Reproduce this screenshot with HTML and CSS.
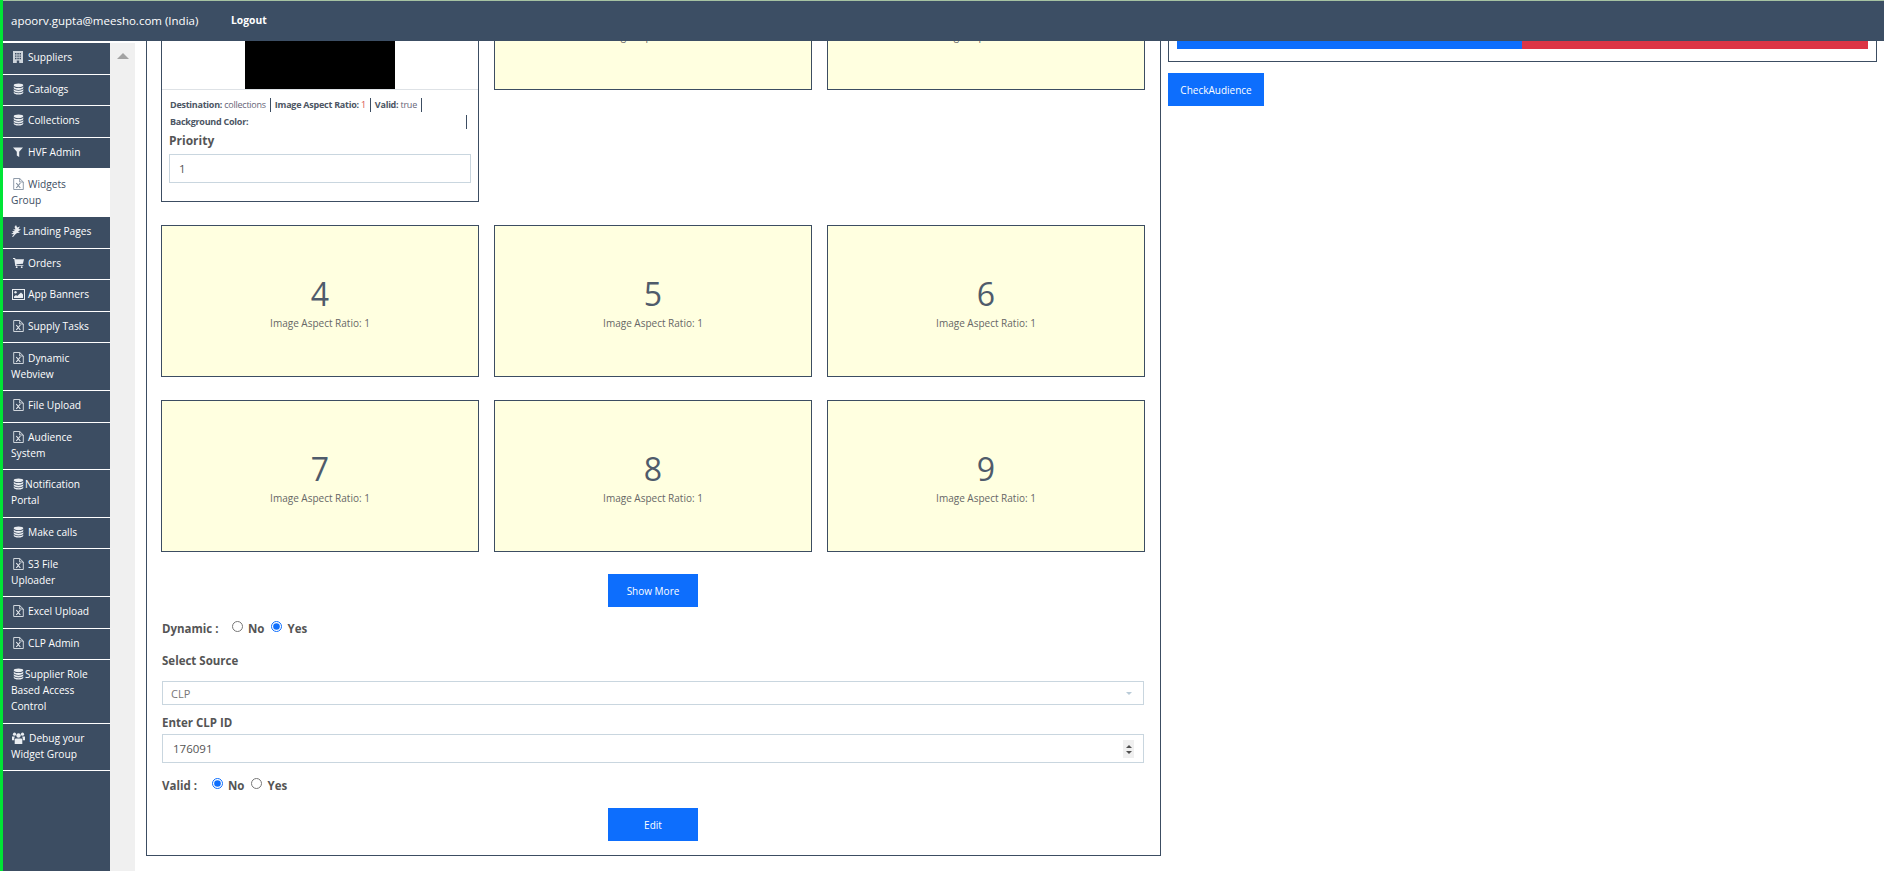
FILE: index.html
```html
<!DOCTYPE html>
<html lang="en">
<head>
<meta charset="utf-8">
<title>Widgets Group</title>
<link rel="stylesheet" href="styles.css">
</head>
<body>
<svg class="sprites" aria-hidden="true">
  <symbol id="i-building" viewBox="0 0 10 12"><path fill-rule="evenodd" d="M0 0h10v12H0zM2 2v1.4h1.5V2zm2.3 0v1.4h1.5V2zm2.2 0v1.4H8V2zM2 4.4v1.4h1.5V4.4zm2.3 0v1.4h1.5V4.4zm2.2 0v1.4H8V4.4zM2 6.8v1.4h1.5V6.8zm2.3 0v1.4h1.5V6.8zm2.2 0v1.4H8V6.8zM3.8 9.4V12h2.4V9.4z"/></symbol>
  <symbol id="i-db" viewBox="0 0 12 12"><ellipse cx="6" cy="2" rx="5.2" ry="2"/><path d="M.8 3.3C1.4 4.5 3.6 5 6 5s4.600-.5 5.200-1.700V5C11.200 6.200 8.800 7 6 7S.8 6.200.8 5zM.8 6.100C1.400 7.300 3.600 7.800 6 7.800s4.600-.5 5.200-1.700v1.600C11.200 8.900 8.800 9.700 6 9.700S.8 8.900.8 7.700zM.8 8.800C1.400 10 3.600 10.500 6 10.500s4.600-.5 5.200-1.700v1.200C11.200 11.200 8.800 12 6 12S.8 11.200.8 10z"/></symbol>
  <symbol id="i-filter" viewBox="0 0 10 10"><path d="M0 .5h10L6.200 4.800V10L3.800 8.400V4.800z"/></symbol>
  <symbol id="i-file" viewBox="0 0 11 12"><path fill="none" stroke="currentColor" stroke-width="1" opacity=".85" d="M.7.5h6l3.600 3.500v7.500H.700zM6.700.5V4h3.600"/><path fill="none" stroke="currentColor" stroke-width="1.100" d="M3.300 5l4 5M7.300 5l-4 5"/></symbol>
  <symbol id="i-leaf" viewBox="0 0 10 12"><path d="M5 0l1.200 2.400L9 1.600 7.500 4l2.500.4-3 2L9 7.800 6 8 4.200 9.500 2 12 1 11.400l2-2.200L0 9l2.500-1.600L1 6.200l3-.2-2-1.600 2.500-.2L3.500 2z"/></symbol>
  <symbol id="i-cart" viewBox="0 0 12 11"><path d="M0 0h2.300l.4 1.500H12l-1.200 4.700-7 .7.200 1h7.300v1H2.500L1.400 1H0z"/><circle cx="4" cy="10" r="1"/><circle cx="9.500" cy="10" r="1"/></symbol>
  <symbol id="i-pic" viewBox="0 0 13 11"><path fill-rule="evenodd" d="M0 0h13v11H0zm1 1v9h11V1z"/><circle cx="3.500" cy="3.300" r="1.200"/><path d="M2 9V7.500l2-1.500 1.200 1L9 3.500l2 2V9z"/></symbol>
  <symbol id="i-users" viewBox="0 0 13 12"><circle cx="6.500" cy="3.500" r="2.200"/><circle cx="2.500" cy="2.200" r="1.600"/><circle cx="10.500" cy="2.200" r="1.600"/><path d="M3.500 6.500h6l.8 1V12H2.700V7.500zM0 4.500h2.800L2.200 6.800v1.500H0zM13 4.500h-2.800l.6 2.300v1.500H13z"/></symbol>
</svg>

<div class="page">
  <header class="topbar">
    <span class="user">apoorv.gupta@meesho.com (India)</span>
    <a class="logout">Logout</a>
  </header>

  <div class="below">
    <nav class="sidebar">
      <a class="item"><svg class="ic ic-b"><use href="#i-building"/></svg>Suppliers</a>
      <a class="item"><svg class="ic"><use href="#i-db"/></svg>Catalogs</a>
      <a class="item"><svg class="ic"><use href="#i-db"/></svg>Collections</a>
      <a class="item"><svg class="ic ic-f"><use href="#i-filter"/></svg>HVF Admin</a>
      <a class="item active"><svg class="ic"><use href="#i-file"/></svg>Widgets Group</a>
      <a class="item"><svg class="ic ic-l"><use href="#i-leaf"/></svg>Landing Pages</a>
      <a class="item"><svg class="ic"><use href="#i-cart"/></svg>Orders</a>
      <a class="item"><svg class="ic ic-p"><use href="#i-pic"/></svg>App Banners</a>
      <a class="item"><svg class="ic"><use href="#i-file"/></svg>Supply Tasks</a>
      <a class="item"><svg class="ic"><use href="#i-file"/></svg>Dynamic Webview</a>
      <a class="item"><svg class="ic"><use href="#i-file"/></svg>File Upload</a>
      <a class="item"><svg class="ic"><use href="#i-file"/></svg>Audience System</a>
      <a class="item"><svg class="ic ic-t"><use href="#i-db"/></svg>Notification Portal</a>
      <a class="item"><svg class="ic"><use href="#i-db"/></svg>Make calls</a>
      <a class="item"><svg class="ic"><use href="#i-file"/></svg>S3 File Uploader</a>
      <a class="item"><svg class="ic"><use href="#i-file"/></svg>Excel Upload</a>
      <a class="item"><svg class="ic"><use href="#i-file"/></svg>CLP Admin</a>
      <a class="item"><svg class="ic ic-t"><use href="#i-db"/></svg>Supplier Role Based Access Control</a>
      <a class="item"><svg class="ic ic-u"><use href="#i-users"/></svg>Debug your Widget Group</a>
    </nav>
    <div class="scrolltrack"><span class="arrow-up"></span></div>

    <main class="mainbox">
      <div class="grid">
        <div class="card card-image">
          <div class="imgwrap"><div class="img"></div></div>
          <div class="meta">
            <span class="m"><b>Destination:</b> collections</span>
            <span class="m"><b>Image Aspect Ratio:</b> <i class="red">1</i></span>
            <span class="m"><b>Valid:</b> true</span>
            <span class="m m-wide"><b>Background Color:</b></span>
          </div>
          <div class="prio">
            <label class="prio-label">Priority</label>
            <input class="prio-input" type="text" value="1">
          </div>
        </div>
        <div class="card slot top"><div class="cap">Image Aspect Ratio: 1</div></div>
        <div class="card slot top"><div class="cap">Image Aspect Ratio: 1</div></div>
        <div class="card slot"><div class="num">4</div><div class="cap">Image Aspect Ratio: 1</div></div>
        <div class="card slot"><div class="num">5</div><div class="cap">Image Aspect Ratio: 1</div></div>
        <div class="card slot"><div class="num">6</div><div class="cap">Image Aspect Ratio: 1</div></div>
        <div class="card slot"><div class="num">7</div><div class="cap">Image Aspect Ratio: 1</div></div>
        <div class="card slot"><div class="num">8</div><div class="cap">Image Aspect Ratio: 1</div></div>
        <div class="card slot"><div class="num">9</div><div class="cap">Image Aspect Ratio: 1</div></div>
      </div>

      <div class="center show"><button class="btn btn-wide">Show More</button></div>

      <form class="form">
        <div class="radios r-dyn">
          <span class="rlabel">Dynamic :</span>
          <label class="r r-first"><input type="radio" name="dyn"><span>No</span></label>
          <label class="r"><input type="radio" name="dyn" checked><span>Yes</span></label>
        </div>
        <div class="flabel f-source">Select Source</div>
        <div class="select"><span>CLP</span><span class="caret"></span></div>
        <div class="flabel f-clp">Enter CLP ID</div>
        <div class="numwrap">
          <input class="number" type="number" value="176091">
          <span class="spin"><i class="spin-up"></i><i class="spin-down"></i></span>
        </div>
        <div class="radios r-valid">
          <span class="rlabel">Valid :</span>
          <label class="r r-first"><input type="radio" name="val" checked><span>No</span></label>
          <label class="r"><input type="radio" name="val"><span>Yes</span></label>
        </div>
      </form>

      <div class="center edit"><button class="btn btn-wide">Edit</button></div>
    </main>

    <aside class="rightcol">
      <div class="audbox">
        <div class="split"><div class="split-a"></div><div class="split-b"></div></div>
      </div>
      <button class="btn btn-check">CheckAudience</button>
    </aside>
  </div>
</div>
</body>
</html>
```

FILE: styles.css
```css
* { box-sizing: border-box; }
html, body { margin: 0; padding: 0; background: #fff; }
body {
  font-family: "Open Sans", "Noto Sans", sans-serif;
  color: #555;
  font-size: 11px;
  overflow: hidden;
}
.sprites { position: absolute; width: 0; height: 0; }

.page {
  height: 871px;
  display: flex;
  flex-direction: column;
  border-left: 3px solid #00e635;
  overflow: hidden;
}
.topbar {
  position: relative;
  z-index: 5;
  flex: 0 0 41px;
  margin-left: -3px;
  padding: 0 0 2px 11px;
  display: flex;
  align-items: center;
  background: #3c4e64;
  border-top: 1px solid #a6c2a2;
  color: #fff;
}
.user { font-size: 11.500px; width: 220px; }
.logout { font-size: 10.300px; font-weight: 700; }

.below { flex: 1; display: flex; min-height: 0; }

.sidebar {
  flex: 0 0 107px;
  padding-top: 2px;
  background: linear-gradient(#fff 2px, #3c4d62 2px);
  display: flex;
  flex-direction: column;
}
.item {
  display: block;
  padding: 6.300px 14px 8.300px 8px;
  line-height: 16px;
  font-size: 10.200px;
  color: #fff;
  border-bottom: 1px solid #fff;
}
.item.active { background: #fff; color: #3c4d62; border-bottom: 0; padding-bottom: 9.300px; }
.ic {
  display: inline-block;
  width: 11px;
  height: 12px;
  margin: 0 4px 0 2px;
  vertical-align: -2px;
  fill: #e9edf1;
  color: #e9edf1;
}
.active .ic { color: #7d8b9b; fill: #7d8b9b; }
.ic-f { width: 10px; height: 10px; margin-right: 5px; vertical-align: -1px; }
.ic-b { width: 10px; margin-right: 5px; fill: #cdd4db; }
.ic-l { width: 10px; margin: 0 2px 0 0; }
.ic-p { width: 13px; height: 11px; margin: 0 3px 0 1px; }
.ic-t { margin-right: 1px; }
.ic-u { width: 13px; margin: 0 4px 0 1px; }

.scrolltrack {
  flex: 0 0 25px;
  margin-top: 2px;
  background: #f0f0f0;
  display: flex;
  justify-content: center;
  align-items: flex-start;
  padding-top: 10px;
}
.arrow-up {
  width: 0;
  height: 0;
  border-left: 6px solid transparent;
  border-right: 6px solid transparent;
  border-bottom: 6px solid #a3a3a3;
}

.mainbox {
  flex: 0 0 1014px;
  margin-left: 11px;
  margin-top: -119px;
  height: 934px;
  padding: 15px 15px 0 14px;
  border: 1px solid #3c4d62;
}
.grid {
  display: grid;
  grid-template-columns: repeat(3, 318px);
  grid-template-rows: 264px 152px 152px;
  column-gap: 15px;
  row-gap: 23px;
}
.card { border: 1px solid #3c4d62; }
.slot {
  height: 152px;
  background: #ffffe0;
  display: flex;
  flex-direction: column;
  align-items: center;
  justify-content: center;
  padding-bottom: 1px;
}
.top { justify-content: flex-start; padding: 90px 0 0; }
.num { font-size: 32px; line-height: 44px; color: #4f5b6b; }
.cap { font-size: 10px; line-height: 14px; color: #666; }

.card-image { height: 264px; }
.imgwrap { display: flex; justify-content: center; border-bottom: 1px solid #dee2e6; }
.img { width: 150px; height: 150px; background: #000; }
.meta {
  display: flex;
  flex-wrap: wrap;
  padding: 8px 7px 0 8px;
  row-gap: 3px;
}
.m {
  font-size: 9px;
  letter-spacing: -.25px;
  line-height: 14px;
  color: #667;
  padding-right: 4px;
  margin-right: 4px;
  border-right: 1px solid #3c4d62;
  white-space: nowrap;
}
.m b { color: #4c5563; font-weight: 700; }
.m-wide { flex: 0 0 297px; margin-right: 0; }
.red { font-style: normal; color: #d9534f; }
.prio { padding: 2px 8px 0 7px; }
.prio-label { display: block; font-size: 12px; font-weight: 700; line-height: 20px; color: #555; }
.prio-input {
  display: block;
  margin-top: 3px;
  width: 302px;
  height: 29px;
  padding: 0 9px;
  border: 1px solid #c9d6df;
  font: 11.500px "Open Sans", sans-serif;
  color: #555;
  outline: 0;
}

.center { display: flex; justify-content: center; }
.show { margin-top: 22px; }
.btn {
  height: 33px;
  border: 0;
  background: #0d6efd;
  color: #fff;
  font: 10px "Open Sans", sans-serif;
}
.btn-wide { width: 90px; }
.btn-check { width: 96px; margin-top: 11px; }

.form { padding-left: 1px; }
.radios { display: flex; align-items: center; height: 18px; font-weight: 700; font-size: 11.500px; color: #555; }
.r-dyn { margin-top: 12px; }
.r-valid { margin-top: 13px; }
.rlabel { width: 70px; }
.r-valid .rlabel { width: 50px; }
.r { display: flex; align-items: center; margin-right: 7px; }
.r input { margin: 0 5px 3px 0; width: 11px; height: 11px; accent-color: #0d6efd; }
.flabel { font-weight: 700; font-size: 11.500px; line-height: 18px; color: #555; }
.f-source { margin-top: 15px; }
.f-clp { margin-top: 9px; }
.select {
  margin-top: 11px;
  width: 982px;
  height: 24px;
  padding: 0 8px;
  display: flex;
  align-items: center;
  justify-content: space-between;
  border: 1px solid #c9d6df;
  font-size: 11px;
  color: #777;
}
.caret {
  width: 0;
  height: 0;
  margin-right: 3px;
  border-left: 3px solid transparent;
  border-right: 3px solid transparent;
  border-top: 3px solid #b9cbd8;
}
.numwrap { position: relative; margin-top: 2px; width: 982px; }
.number {
  display: block;
  width: 100%;
  height: 29px;
  padding: 0 9px 0 10px;
  border: 1px solid #c9d6df;
  font: 11.500px "Open Sans", sans-serif;
  color: #555;
  outline: 0;
}
.number::-webkit-inner-spin-button { display: none; }
.spin {
  position: absolute;
  right: 10px;
  top: 6px;
  width: 11px;
  height: 18px;
  background: #f0f0f0;
  display: flex;
  flex-direction: column;
  align-items: center;
  justify-content: center;
  gap: 3px;
}
.spin-up, .spin-down {
  width: 0;
  height: 0;
  border-left: 3px solid transparent;
  border-right: 3px solid transparent;
}
.spin-up { border-bottom: 3px solid #505050; }
.spin-down { border-top: 3px solid #505050; }
.edit { margin-top: 14px; }

.rightcol { flex: 0 0 709px; margin-left: 7px; margin-top: -45px; }
.audbox { height: 66px; padding: 12px 8px; border: 1px solid #3c4d62; }
.split { display: flex; height: 40px; }
.split-a { flex: 0 0 345px; background: #0d6efd; }
.split-b { flex: 1; background: #dc3545; }
```
